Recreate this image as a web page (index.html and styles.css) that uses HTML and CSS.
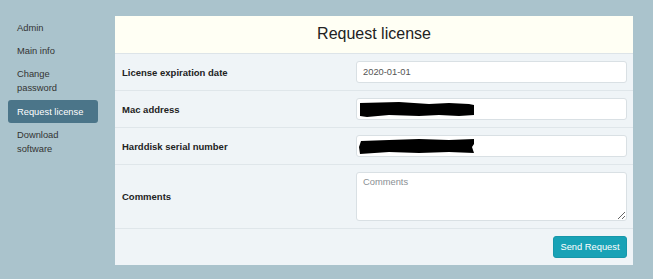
FILE: index.html
```html
<!DOCTYPE html>
<html lang="en">
<head>
<meta charset="utf-8">
<title>Request license</title>
<link rel="stylesheet" href="styles.css">
</head>
<body>
<div class="layout">
  <nav class="sidebar">
    <a class="nav-item">Admin</a>
    <a class="nav-item">Main info</a>
    <a class="nav-item">Change password</a>
    <a class="nav-item active">Request license</a>
    <a class="nav-item">Download software</a>
  </nav>
  <main class="panel">
    <div class="panel-header">Request license</div>
    <div class="row">
      <div class="label">License expiration date</div>
      <div class="field"><input class="input" type="text" value="2020-01-01"></div>
    </div>
    <div class="row">
      <div class="label">Mac address</div>
      <div class="field">
        <div class="redact-wrap">
          <input class="input" type="text" value="">
          <svg class="redact" width="116" height="17" viewBox="0 0 116 17"><path d="M1 2 L40 1 L70 3 L90 2 L110 3 L115 4 L115 14 L100 15 L80 14 L60 15 L30 14 L8 16 L1 15 Z" fill="#000"/></svg>
        </div>
      </div>
    </div>
    <div class="row">
      <div class="label">Harddisk serial number</div>
      <div class="field">
        <div class="redact-wrap">
          <input class="input" type="text" value="">
          <svg class="redact" width="116" height="17" viewBox="0 0 116 17"><path d="M2 3 L30 2 L60 1 L90 2 L115 1 L115 6 L113 9 L115 15 L90 14 L60 15 L30 14 L1 16 L0 9 Z" fill="#000"/></svg>
        </div>
      </div>
    </div>
    <div class="row">
      <div class="label">Comments</div>
      <div class="field"><textarea class="textarea" placeholder="Comments"></textarea></div>
    </div>
    <div class="footer">
      <button class="btn" type="button">Send Request</button>
    </div>
  </main>
</div>
</body>
</html>
```
FILE: styles.css
```css
* { box-sizing: border-box; }
body {
  margin: 0;
  background: #aac3cc;
  font-family: "Liberation Sans", Arial, sans-serif;
  font-size: 9.33px;
  color: #333;
}
.layout {
  display: flex;
  align-items: flex-start;
  gap: 17px;
  padding: 16px 20px 0 8px;
}
.sidebar {
  width: 90px;
  display: flex;
  flex-direction: column;
}
.nav-item {
  display: block;
  padding: 4.67px 9px;
  line-height: 14px;
  color: #333;
  border-radius: 3px;
}
.nav-item.active {
  background: #4b7589;
  color: #fff;
}
.panel {
  width: 518px;
  background: #eff4f7;
}
.panel-header {
  height: 38px;
  background: #fffff4;
  border-bottom: 1px solid #dde4e8;
  text-align: center;
  font-size: 16px;
  line-height: 35px;
  color: #222;
}
.row {
  display: grid;
  grid-template-columns: 234px 1fr;
  align-items: center;
  border-bottom: 1px solid #dfe6ea;
}
.label {
  padding: 7px;
  font-weight: bold;
  font-size: 9.5px;
  color: #222;
}
.field {
  padding: 7px 6px 7px 7px;
}
.input, .textarea {
  display: block;
  width: 100%;
  border: 1px solid #d9e0e4;
  border-radius: 3px;
  background: #fff;
  font-family: "Liberation Sans", Arial, sans-serif;
  font-size: 9.33px;
  color: #555;
  outline: none;
}
.input {
  height: 22px;
  padding: 0 6px;
}
.textarea {
  height: 49px;
  padding: 4px 6px;
  resize: vertical;
}
.textarea::placeholder { color: #8a8f94; }
.redact-wrap { position: relative; }
.redact {
  position: absolute;
  left: 3px;
  top: 3px;
}
.footer {
  display: flex;
  justify-content: flex-end;
  padding: 7px 6px;
}
.btn {
  width: 74px;
  height: 22px;
  border: 1px solid #1697aa;
  border-radius: 3px;
  background: #18a2b6;
  color: #fff;
  font-family: "Liberation Sans", Arial, sans-serif;
  font-size: 9.33px;
  padding: 0;
}
```
